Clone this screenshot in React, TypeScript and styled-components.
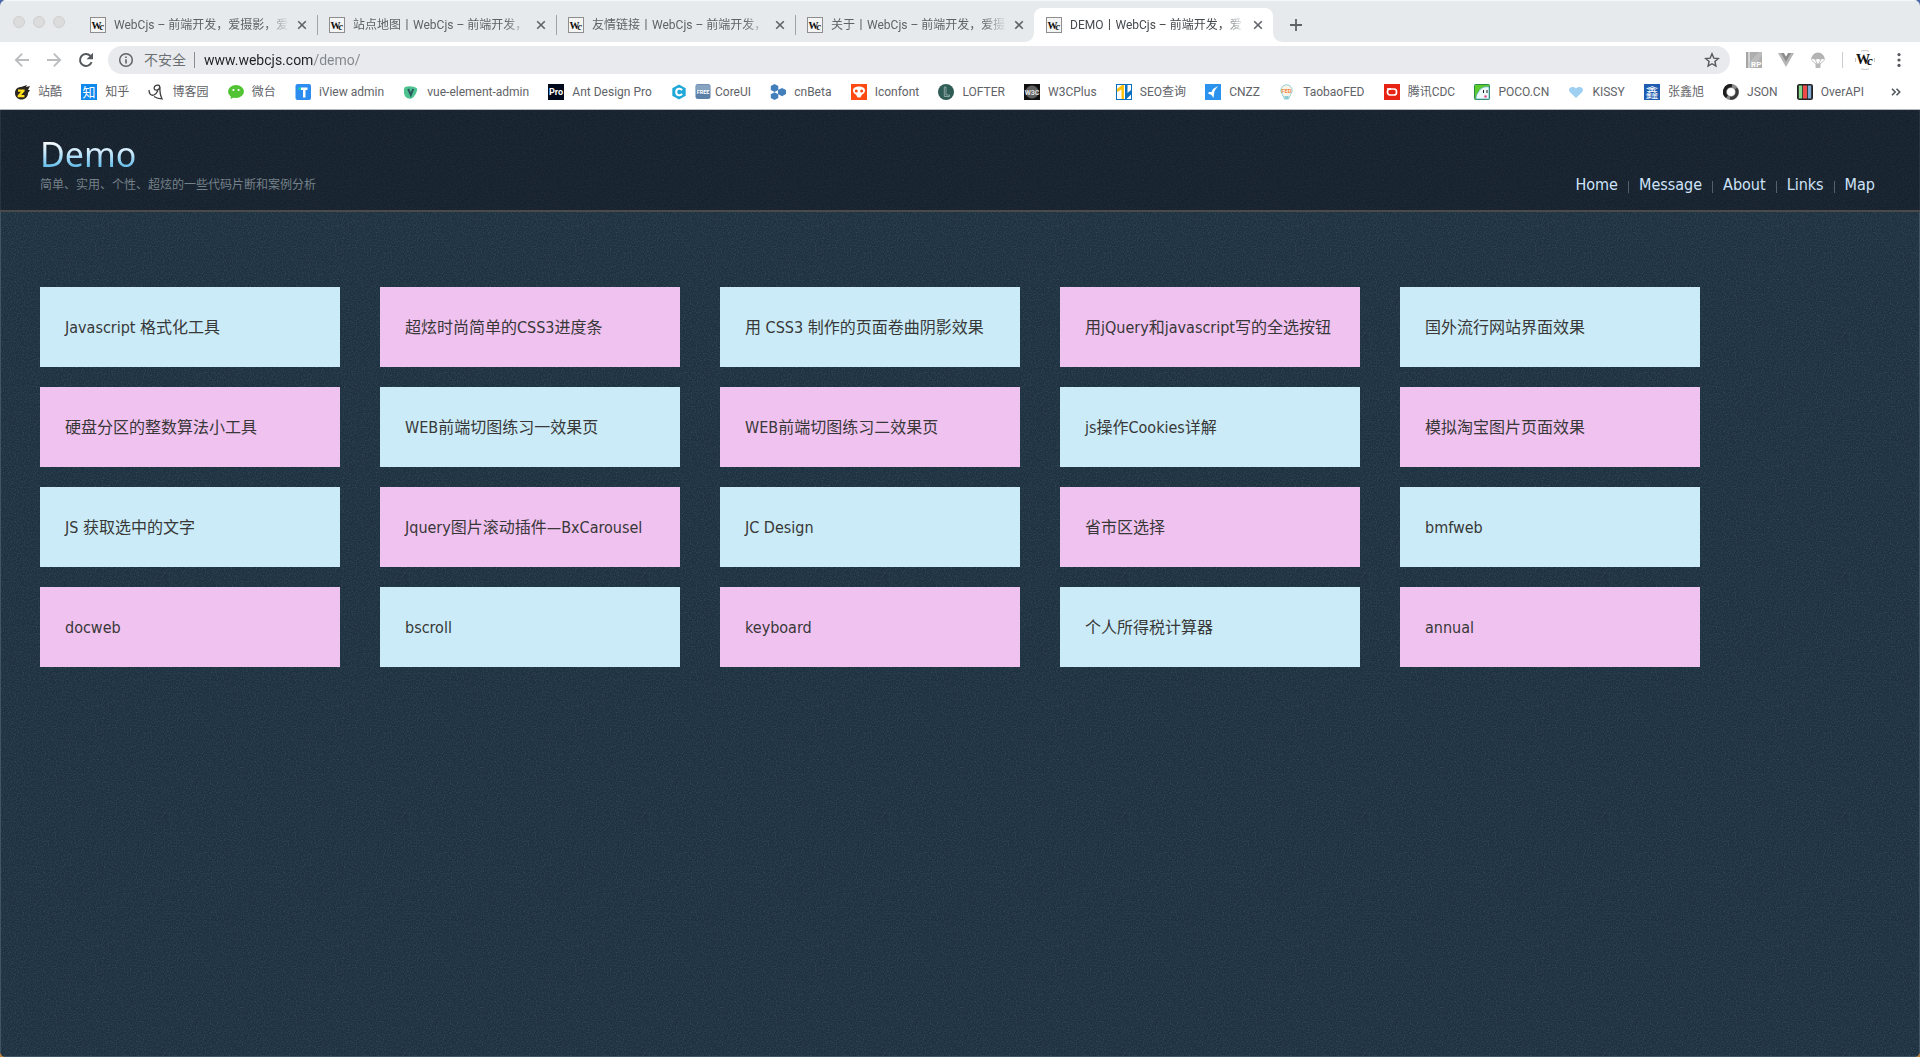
import React from "react";
import styled, { createGlobalStyle } from "styled-components";

const uiFont = `Roboto, "Noto Sans CJK SC", sans-serif`;
const pageFont = `"DejaVu Sans Condensed", "Noto Sans CJK SC", sans-serif`;

const grain =
  "url(\"data:image/svg+xml;utf8,<svg xmlns='http://www.w3.org/2000/svg' width='240' height='240'><filter id='n'><feTurbulence type='fractalNoise' baseFrequency='0.85' numOctaves='2' stitchTiles='stitch'/><feColorMatrix values='0 0 0 0 0.3 0 0 0 0 0.42 0 0 0 0 0.5 0 0 0 2.4 -1'/></filter><rect width='240' height='240' filter='url(%23n)' opacity='0.16'/></svg>\")";

const GlobalStyle = createGlobalStyle`
  * { box-sizing: border-box; }
  body {
    margin: 0;
    background: linear-gradient(#4a68a8, #b9803f);
    font-family: ${uiFont};
  }
  button {
    border: 0;
    padding: 0;
    margin: 0;
    background: none;
    font: inherit;
    color: inherit;
  }
  a { text-decoration: none; color: inherit; }
  svg { display: block; flex: none; }
`;

const Window = styled.div`
  display: flex;
  flex-direction: column;
  min-height: 100vh;
  border-radius: 6px;
  overflow: hidden;
`;

/* ---------- browser frame ---------- */

const TabStrip = styled.div`
  display: flex;
  align-items: flex-end;
  height: 42px;
  background: #e6eaed;
  border-top: 1px solid #f5f8f9;
`;

const WindowButtons = styled.div`
  display: flex;
  align-items: center;
  gap: 8px;
  width: 78px;
  height: 41px;
  padding-left: 13px;
`;

const WindowButton = styled.button`
  width: 12px;
  height: 12px;
  border-radius: 50%;
  background: #dcdcdc;
  border: 1px solid #cfcfcf;
`;

const Tab = styled.div<{ $active?: boolean; $divided?: boolean }>`
  position: relative;
  display: flex;
  align-items: center;
  width: 239px;
  height: 34px;
  padding: 0 7px 0 12px;
  border-radius: 8px 8px 0 0;
  background: ${(p) => (p.$active ? "#fff" : "transparent")};
  color: ${(p) => (p.$active ? "#45494d" : "#5f6368")};

  &::after {
    content: "";
    display: ${(p) => (p.$divided ? "block" : "none")};
    position: absolute;
    right: -1px;
    top: 7px;
    width: 1px;
    height: 20px;
    background: #a0a4a8;
  }
`;

const TabFoot = styled.span<{ $side: "left" | "right" }>`
  position: absolute;
  bottom: 0;
  ${(p) => p.$side}: -8px;
  width: 8px;
  height: 8px;
  background: radial-gradient(
    circle at ${(p) => (p.$side === "left" ? "0 0" : "100% 0")},
    transparent 7px,
    #fff 8px
  );
`;

const TabTitle = styled.button`
  flex: 1;
  min-width: 0;
  margin: 0 4px 0 8px;
  overflow: hidden;
  white-space: nowrap;
  text-align: left;
  font-size: 12px;
  line-height: 20px;
  mask-image: linear-gradient(90deg, #000 calc(100% - 24px), transparent);
`;

const IconButton = styled.button<{ $size?: number }>`
  display: grid;
  place-items: center;
  flex: none;
  width: ${(p) => p.$size ?? 16}px;
  height: ${(p) => p.$size ?? 16}px;
  color: #5f6368;
`;

const NewTab = styled(IconButton)`
  margin: 0 0 3px 9px;
`;

const Toolbar = styled.div`
  display: flex;
  align-items: center;
  height: 36px;
  padding: 0 13px 0 6px;
  background: #fff;
`;

const Omnibox = styled.div`
  display: flex;
  align-items: center;
  flex: 1;
  height: 28px;
  margin: 0 16px 0 6px;
  padding: 0 8px 0 10px;
  border-radius: 14px;
  background: #e8eaed;
  color: #6b6f74;
  font-size: 14px;
`;

const Insecure = styled.label`
  margin-left: 10px;
  padding-right: 8px;
  line-height: 16px;
  border-right: 1px solid #8b8f93;
`;

const UrlInput = styled.input`
  flex: 1;
  min-width: 0;
  margin-left: 9px;
  padding: 0;
  border: 0;
  outline: 0;
  font: 14px/20px ${uiFont};
  color: transparent;
  caret-color: #202124;
  background: linear-gradient(90deg, #202124 110px, #80868b 110px);
  background-clip: text;
  -webkit-background-clip: text;
`;

const Extensions = styled.div`
  display: flex;
  align-items: center;
  gap: 16px;
`;

const Separator = styled.span`
  width: 1px;
  height: 16px;
  margin-right: -4px;
  background: #c9ccd0;
`;

const BookmarkBar = styled.nav`
  display: flex;
  align-items: center;
  height: 32px;
  padding: 0 16px 4px 14px;
  background: #fff;
  border-bottom: 1px solid #b6b9bc;
  color: #5f6368;
  font-size: 12px;
`;

const BookmarkList = styled.div`
  display: flex;
  flex: 1;
  justify-content: space-between;
  margin-right: 24px;
`;

const Bookmark = styled.a`
  display: flex;
  align-items: center;
  gap: 8px;
  white-space: nowrap;
  line-height: 20px;
`;

const BookmarkLabel = styled.span`
  display: flex;
  align-items: center;
  gap: 4px;
`;

/* ---------- demo page ---------- */

const Page = styled.div`
  flex: 1;
  background: ${grain} #1e3140;
  box-shadow: inset 1px 0 #3f5564, inset -1px -1px #3f5564;
  font-family: ${pageFont};
`;

const Header = styled.header`
  display: flex;
  justify-content: space-between;
  align-items: flex-end;
  padding: 21px 45px 16px 40px;
  border-bottom: 2px solid #4a4a4a;
  background: rgba(15, 20, 28, 0.5);
`;

const Title = styled.h1`
  width: fit-content;
  margin: 0;
  font: 400 34px/46px "Noto Sans", sans-serif;
  color: transparent;
  background: linear-gradient(#fff 20%, #cdeafb 45%, #4fb4e6 85%);
  background-clip: text;
  -webkit-background-clip: text;
`;

const Tagline = styled.p`
  margin: 0;
  font-size: 12px;
  line-height: 17px;
  color: #75818a;
`;

const MainNav = styled.nav`
  display: flex;
  align-items: center;
`;

const NavLink = styled.a`
  display: flex;
  align-items: center;
  font-size: 16px;
  line-height: 18px;
  color: #cfe4fa;

  & + &::before {
    content: "";
    width: 1px;
    height: 12px;
    margin: 3px 10px 0;
    background: #54616c;
  }
`;

const DemoGrid = styled.main`
  display: grid;
  grid-template-columns: repeat(auto-fill, 300px);
  gap: 20px 40px;
  padding: 75px 40px;
`;

const DemoCard = styled.a`
  display: flex;
  align-items: center;
  height: 80px;
  padding: 2px 25px 0;
  background: #caebf7;
  color: #383838;
  font-size: 16px;
  line-height: 24px;

  &:nth-child(even) {
    background: #f0c2ef;
  }
`;

/* ---------- icons ---------- */

const Svg = ({ size = 16, children }: { size?: number; children: React.ReactNode }) => (
  <svg width={size} height={size} viewBox="0 0 16 16" aria-hidden="true">
    {children}
  </svg>
);

type GlyphProps = {
  x?: number;
  y: number;
  size: number;
  fill: string;
  weight?: number;
  family?: string;
  italic?: boolean;
  children: string;
};
const Glyph = ({ x = 8, y, size, fill, weight = 400, family = uiFont, italic, children }: GlyphProps) => (
  <text
    x={x}
    y={y}
    fontSize={size}
    fill={fill}
    fontWeight={weight}
    fontFamily={family}
    fontStyle={italic ? "italic" : "normal"}
    textAnchor="middle"
  >
    {children}
  </text>
);

const serif = `"Liberation Serif", serif`;

const WcIcon = () => (
  <Svg>
    <rect x=".5" y=".5" width="15" height="15" fill="#f4f4f4" stroke="#8e8e8e" />
    <Glyph x={6.5} y={11.5} size={10} fill="#111" weight={700} family={serif}>W</Glyph>
    <Glyph x={11.8} y={12.5} size={10} fill="#111" weight={700} family={serif} italic>c</Glyph>
  </Svg>
);

const CloseIcon = () => (
  <Svg>
    <path d="M4.2 4.2l7.6 7.6M11.8 4.2l-7.6 7.6" stroke="currentColor" strokeWidth="1.6" />
  </Svg>
);

const PlusIcon = () => (
  <Svg>
    <path d="M8 2v12M2 8h12" stroke="currentColor" strokeWidth="1.8" />
  </Svg>
);

const BackIcon = () => (
  <Svg>
    <path d="M15 8H2M8.2 1.6L1.8 8l6.4 6.4" fill="none" stroke="#babcbe" strokeWidth="1.8" />
  </Svg>
);

const ForwardIcon = () => (
  <Svg>
    <path d="M1 8h13M7.8 1.6L14.2 8l-6.4 6.4" fill="none" stroke="#babcbe" strokeWidth="1.8" />
  </Svg>
);

const ReloadIcon = () => (
  <Svg>
    <path d="M13.6 10.2A6 6 0 1 1 12.3 3.8L13.6 5.2" fill="none" stroke="#55595e" strokeWidth="2" />
    <path d="M15 .8v6.4H8.6z" fill="#55595e" />
  </Svg>
);

const InfoIcon = () => (
  <Svg>
    <circle cx="8" cy="8" r="6.3" fill="none" stroke="#5f6368" strokeWidth="1.5" />
    <path d="M7.2 7.2h1.6v4.2H7.2zM7.2 4.5h1.6v1.6H7.2z" fill="#5f6368" />
  </Svg>
);

const StarIcon = () => (
  <Svg>
    <path
      d="M8 1.8l1.8 4.3 4.6.4-3.5 3 1 4.6L8 11.7l-3.9 2.4 1-4.6-3.5-3 4.6-.4z"
      fill="none"
      stroke="#55595e"
      strokeWidth="1.4"
    />
  </Svg>
);

const AxureIcon = () => (
  <Svg>
    <path d="M0 0h2.5v16H0z" fill="#a5a5a5" />
    <path d="M3.5 0H16v16H3.5z" fill="#aeaeae" />
    <path d="M3.5 10L13 0h3v3L8 16H3.5z" fill="#bcbcbc" />
    <Glyph x={10.2} y={14.5} size={8} fill="#fff" weight={700}>RP</Glyph>
  </Svg>
);

const VueIcon = () => (
  <Svg>
    <path d="M0 1h16L8 15z" fill="#b5b5b5" />
    <path d="M3 1h3l2 3.4L10 1h3L8 9.8z" fill="#8b8b8b" />
    <path d="M6 1h4L8 4.4z" fill="#fff" />
  </Svg>
);

const ParachuteIcon = () => (
  <Svg>
    <path d="M1 8a7 7.6 0 0 1 14 0c-1.3-1.3-3-1.3-4.4 0-1.5-1.3-3.6-1.3-5.2 0C4 6.7 2.3 6.7 1 8z" fill="#b3b3b3" />
    <path d="M1.5 8L6 12M14.5 8L10 12M5.5 8L7 12M10.5 8L9 12" stroke="#c2c2c2" fill="none" />
    <rect x="5.5" y="11.5" width="5" height="4.5" rx="1" fill="#b9b9b9" />
  </Svg>
);

const AvatarIcon = () => (
  <svg width="20" height="20" viewBox="0 0 20 20" aria-hidden="true">
    <path d="M6 1.2a9.6 9.6 0 0 1 8 0M6 18.8a9.600 9.600 0 0 0 8 0M.6 8v4M19.400 8v4" fill="none" stroke="#c4c4c4" />
    <Glyph x={8} y={14} size={14} fill="#111" weight={700} family={serif}>W</Glyph>
    <Glyph x={15} y={15} size={13} fill="#111" weight={700} family={serif} italic>c</Glyph>
  </svg>
);

const MenuIcon = () => (
  <Svg>
    {[2.6, 8, 13.4].map((cy) => (
      <circle key={cy} cx="8" cy={cy} r="1.6" fill="#55595e" />
    ))}
  </Svg>
);

const FreeIcon = () => (
  <Svg>
    <rect x=".5" y="0" width="15" height="15" rx="2.5" fill="#5d80a8" />
    <rect x="1" y=".5" width="14" height="6" rx="2" fill="#86a3c0" />
    <Glyph y={9.5} size={5.5} fill="#fff" weight={700}>FREE</Glyph>
  </Svg>
);

const icons: Record<string, React.ReactNode> = {
  zcool: (
    <>
      <path d="M1 9C1 5 4 3 7 3l6-2-1 2 4-1-2 4 2 0-2 3c0 4-3 6.5-6.5 6.5S1 13 1 9z" fill="#2b2622" />
      <path d="M4 5.500h6.600v1.800L7.200 11h3.200v2.200H3.600v-1.800L7 7.700H4z" fill="#ffdf1b" />
    </>
  ),
  zhihu: (
    <>
      <rect width="16" height="16" fill="#0f88eb" />
      <Glyph y={13} size={13} fill="#fff" family={`"Noto Sans CJK SC", sans-serif`}>知</Glyph>
    </>
  ),
  cnblogs: (
    <path
      d="M1 6c0 4 2 6 5 5 2-.8 3-2.500 4-4.500M10.500 1.200C7.500.8 5.800 2.800 6.200 4.800c.6 2 4.300 1.700 5.300-.8.500-1.500-.3-2.500-1-2.800M12 3c-.3 4 .3 8.500 2 11.800-3 0-5.500-.6-8-2.300"
      fill="none"
      stroke="#3c3c3c"
      strokeWidth="1.3"
    />
  ),
  wechat: (
    <>
      <ellipse cx="8" cy="7.5" rx="8" ry="6.5" fill="#52c332" />
      <path d="M3 11l-.5 4 4-2z" fill="#52c332" />
      <circle cx="5.4" cy="6" r="1.1" fill="#fff" />
      <circle cx="10.6" cy="6" r="1.1" fill="#fff" />
    </>
  ),
  iview: (
    <>
      <rect x=".5" y="0" width="15.5" height="16" rx="2" fill="#2d8cf0" />
      <path d="M6 3.500h6.500V6h-2v7.500H8V6H6z" fill="#fff" />
      <path d="M3.500 3.500H6V6H3.500z" fill="#19d4ae" />
    </>
  ),
  vueAdmin: (
    <>
      <path d="M2 3c4-1.500 9-1 12 1.500 1 1-1.500 7-4.500 9.500-2 1.500-6 .5-7.500-2S.5 4 2 3z" fill="#4cc38f" />
      <path d="M5.200 5l2.600 6 2.400-6" fill="none" stroke="#2f5560" strokeWidth="2" />
    </>
  ),
  pro: (
    <>
      <rect width="16" height="16" fill="#010a1c" />
      <Glyph y={11} size={9} fill="#fff" weight={700}>Pro</Glyph>
    </>
  ),
  coreui: (
    <>
      <path d="M8 .5l6.700 3.700v7.600L8 15.500l-6.700-3.700V4.200z" fill="#20a8d8" />
      <path d="M11 6.300C9.800 4 5.200 4 5.200 8s4.600 4 5.800 1.700" fill="none" stroke="#fff" strokeWidth="2" />
    </>
  ),
  cnbeta: (
    <path
      d="M4.500 0l3.800 2v3.900L4.500 8 .8 5.900V2zM12 4l4 2.100v4L12 12.200l-4-2.100v-4zM4.500 8.200l3.800 2V14l-3.800 2-3.700-2v-3.800z"
      fill="#4380bb"
    />
  ),
  iconfont: (
    <>
      <rect width="16" height="16" fill="#ff4a12" />
      <path d="M2 6.500C2 3.500 5 2.500 8 2.500s6 1 6 4c0 2-1.500 3.500-3 4l-1.500 3h-3L5 10.500c-1.500-.5-3-2-3-4z" fill="#fff" />
      <circle cx="5.3" cy="7" r="1.5" fill="#ff4a12" />
      <circle cx="10.7" cy="7" r="1.5" fill="#ff4a12" />
    </>
  ),
  lofter: (
    <>
      <circle cx="8" cy="8" r="8" fill="#2f5c55" />
      <path d="M6.300 3v9.500h5.200V11H8V3z" fill="none" stroke="#9fb8b2" strokeWidth=".8" />
    </>
  ),
  w3cplus: (
    <>
      <rect width="16" height="16" fill="#111" />
      <circle cx="8" cy="8" r="6.5" fill="#606060" />
      <Glyph y={10.5} size={7} fill="#e2e2e2" weight={700}>W3C</Glyph>
    </>
  ),
  seo: (
    <>
      <rect x=".5" y=".5" width="15" height="15" fill="#fff" stroke="#0b6fc0" />
      <path d="M1 5l5-4h2v14H5.500V5.500L1 8z" fill="#ffc20e" />
      <path d="M9 1h2.500v8L15 6v4.500L10.500 15H9z" fill="#0b6fc0" />
    </>
  ),
  cnzz: (
    <>
      <rect width="16" height="16" fill="#2b93ee" />
      <path d="M13 2L9.500 7 8.500 14 6.500 11 3 9.500l1-1.500h2.500L8 5z" fill="#fff" />
    </>
  ),
  taobao: (
    <>
      <path d="M7.500.7a5.800 5.800 0 0 1 4 9.900L9.500 15h-4l-2-4.400a5.800 5.800 0 0 1 4-9.900z" fill="#fbf3e6" stroke="#8fd0dc" />
      <path d="M5.500 12h4v3h-4z" fill="#8ccbd6" />
      <Glyph x={7.5} y={8.5} size={6} fill="#f08a4b" weight={700}>FED</Glyph>
    </>
  ),
  cdc: (
    <>
      <rect width="16" height="16" fill="#e82313" />
      <rect x="3.5" y="5" width="9" height="6" rx="2.5" fill="none" stroke="#fff" strokeWidth="1.7" />
      <path d="M3 4.200h4v1.600H3z" fill="#fff" />
    </>
  ),
  poco: (
    <>
      <rect x=".5" y=".5" width="15" height="15" rx="1" fill="#5ccb2c" stroke="#2b8a4a" />
      <path d="M2 15c0-5 2-6 3-8s4-5 10-4v12z" fill="#eefafa" stroke="#4a9ec2" strokeWidth=".7" />
      <path d="M9.500 6v3M13 6v3" stroke="#222" />
      <circle cx="11.5" cy="12.5" r="1.3" fill="#e84a8a" />
    </>
  ),
  kissy: <path d="M8 14L1.800 8C-.8 5 3.500.8 8 4.500c4.500-3.700 8.800.5 6.200 3.500z" fill="#9dd0f1" />,
  zxx: (
    <>
      <rect width="16" height="16" fill="#1f5db0" />
      <Glyph y={13} size={13} fill="#fff" family={`"Noto Sans CJK SC", sans-serif`}>鑫</Glyph>
    </>
  ),
  json: (
    <>
      <circle cx="8" cy="8" r="6" fill="none" stroke="#8a8a8a" strokeWidth="4" />
      <path d="M9 1.800A6.200 6.200 0 0 0 4 12.800" fill="none" stroke="#1d1d1d" strokeWidth="3.2" />
      <path d="M7 14.200A6.200 6.200 0 0 0 13 4.500" fill="none" stroke="#3a3a3a" strokeWidth="2.8" />
    </>
  ),
  overapi: (
    <>
      <rect x=".7" y=".7" width="14.6" height="14.6" rx="1.5" fill="#222" stroke="#222" strokeWidth="1.4" />
      <path d="M1.800 1.500h3.400v13H1.800z" fill="#86d98b" />
      <path d="M6 1.500h4v13H6z" fill="#ee4a4a" />
      <path d="M10.800 1.500h3.400v13h-3.400z" fill="#7fa9d6" />
    </>
  ),
};

const bookmarks: { icon: string; label: string; free?: boolean }[] = [
  { icon: "zcool", label: "站酷" },
  { icon: "zhihu", label: "知乎" },
  { icon: "cnblogs", label: "博客园" },
  { icon: "wechat", label: "微台" },
  { icon: "iview", label: "iView admin" },
  { icon: "vueAdmin", label: "vue-element-admin" },
  { icon: "pro", label: "Ant Design Pro" },
  { icon: "coreui", label: "CoreUI", free: true },
  { icon: "cnbeta", label: "cnBeta" },
  { icon: "iconfont", label: "Iconfont" },
  { icon: "lofter", label: "LOFTER" },
  { icon: "w3cplus", label: "W3CPlus" },
  { icon: "seo", label: "SEO查询" },
  { icon: "cnzz", label: "CNZZ" },
  { icon: "taobao", label: "TaobaoFED" },
  { icon: "cdc", label: "腾讯CDC" },
  { icon: "poco", label: "POCO.CN" },
  { icon: "kissy", label: "KISSY" },
  { icon: "zxx", label: "张鑫旭" },
  { icon: "json", label: "JSON" },
  { icon: "overapi", label: "OverAPI" },
];

const tabs = [
  "WebCjs – 前端开发，爱摄影，爱",
  "站点地图丨WebCjs – 前端开发，",
  "友情链接丨WebCjs – 前端开发，",
  "关于丨WebCjs – 前端开发，爱摄",
  "DEMO丨WebCjs – 前端开发，爱",
];

const demos = [
  "Javascript 格式化工具",
  "超炫时尚简单的CSS3进度条",
  "用 CSS3 制作的页面卷曲阴影效果",
  "用jQuery和javascript写的全选按钮",
  "国外流行网站界面效果",
  "硬盘分区的整数算法小工具",
  "WEB前端切图练习一效果页",
  "WEB前端切图练习二效果页",
  "js操作Cookies详解",
  "模拟淘宝图片页面效果",
  "JS 获取选中的文字",
  "Jquery图片滚动插件—BxCarousel",
  "JC Design",
  "省市区选择",
  "bmfweb",
  "docweb",
  "bscroll",
  "keyboard",
  "个人所得税计算器",
  "annual",
];

export default function App() {
  return (
    <Window>
      <GlobalStyle />
      <TabStrip>
        <WindowButtons>
          <WindowButton aria-label="Close window" />
          <WindowButton aria-label="Minimize window" />
          <WindowButton aria-label="Zoom window" />
        </WindowButtons>
        {tabs.map((title, i) => {
          const active = i === tabs.length - 1;
          return (
            <Tab key={title} $active={active} $divided={i < tabs.length - 2}>
              {active && <TabFoot $side="left" />}
              <WcIcon />
              <TabTitle>{title}</TabTitle>
              <IconButton aria-label="Close tab">
                <CloseIcon />
              </IconButton>
              {active && <TabFoot $side="right" />}
            </Tab>
          );
        })}
        <NewTab $size={28} aria-label="New tab">
          <PlusIcon />
        </NewTab>
      </TabStrip>

      <Toolbar>
        <IconButton $size={32} aria-label="Back"><BackIcon /></IconButton>
        <IconButton $size={32} aria-label="Forward"><ForwardIcon /></IconButton>
        <IconButton $size={32} aria-label="Reload"><ReloadIcon /></IconButton>
        <Omnibox>
          <InfoIcon />
          <Insecure htmlFor="url">不安全</Insecure>
          <UrlInput id="url" defaultValue="www.webcjs.com/demo/" />
          <IconButton $size={20} aria-label="Bookmark this page"><StarIcon /></IconButton>
        </Omnibox>
        <Extensions>
          <IconButton aria-label="Axure RP"><AxureIcon /></IconButton>
          <IconButton aria-label="Vue devtools"><VueIcon /></IconButton>
          <IconButton aria-label="Parachute"><ParachuteIcon /></IconButton>
          <Separator />
          <IconButton $size={20} aria-label="Profile"><AvatarIcon /></IconButton>
          <IconButton aria-label="Menu"><MenuIcon /></IconButton>
        </Extensions>
      </Toolbar>

      <BookmarkBar aria-label="Bookmarks">
        <BookmarkList>
          {bookmarks.map((b) => (
            <Bookmark key={b.icon} href="#">
              <Svg>{icons[b.icon]}</Svg>
              <BookmarkLabel>
                {b.free && <FreeIcon />}
                {b.label}
              </BookmarkLabel>
            </Bookmark>
          ))}
        </BookmarkList>
        <IconButton aria-label="More bookmarks">
          <Svg>
            <path d="M4 4.800L7.200 8 4 11.200M8.500 4.800L11.700 8l-3.200 3.200" fill="none" stroke="#55595e" strokeWidth="1.6" />
          </Svg>
        </IconButton>
      </BookmarkBar>

      <Page>
        <Header>
          <div>
            <Title>Demo</Title>
            <Tagline>简单、实用、个性、超炫的一些代码片断和案例分析</Tagline>
          </div>
          <MainNav aria-label="Main">
            {["Home", "Message", "About", "Links", "Map"].map((name) => (
              <NavLink key={name} href="#">{name}</NavLink>
            ))}
          </MainNav>
        </Header>
        <DemoGrid>
          {demos.map((text) => (
            <DemoCard key={text} href="#">{text}</DemoCard>
          ))}
        </DemoGrid>
      </Page>
    </Window>
  );
}
